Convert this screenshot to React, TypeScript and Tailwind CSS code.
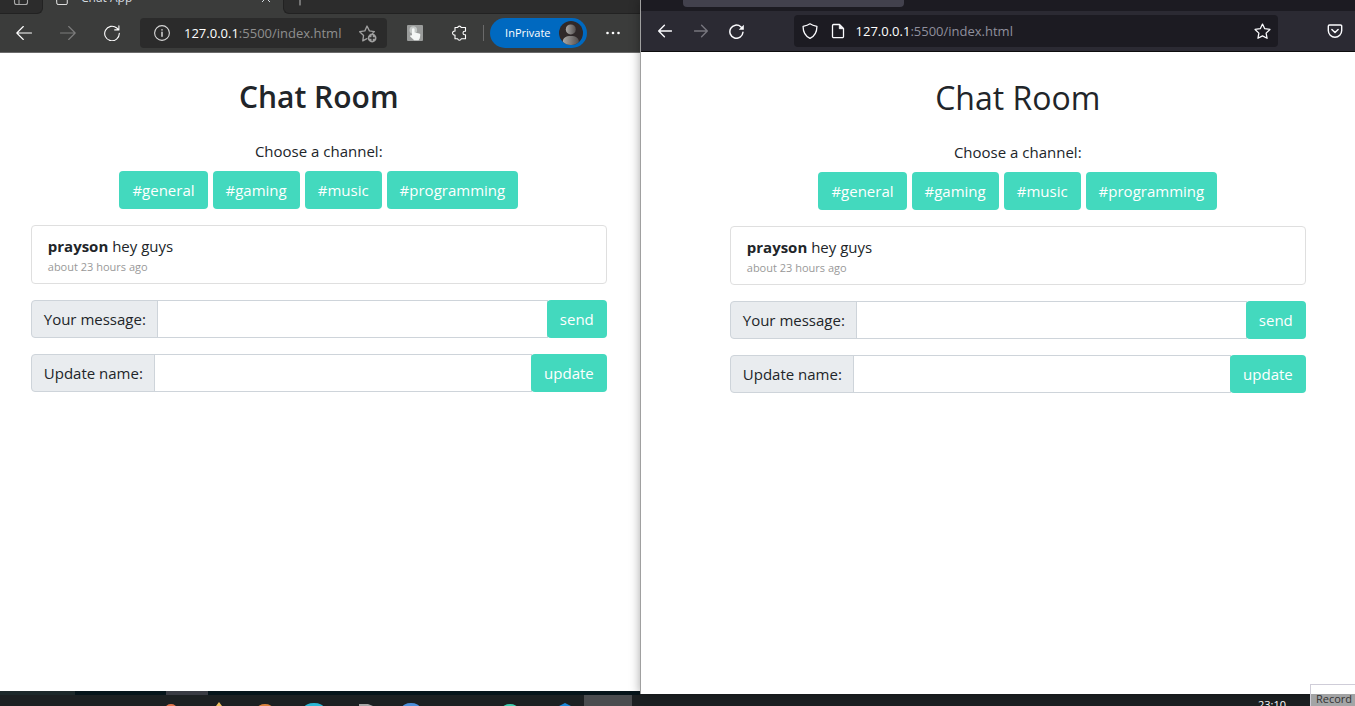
import React, { useId } from "react";
import type { ReactNode } from "react";

const CHANNELS = ["#general", "#gaming", "#music", "#programming"];

const TASKBAR_ICONS = [
  { x: 171, top: 13, r: 6, color: "#e2744a" },
  { x: 265, top: 13, r: 8, color: "#d9803c" },
  { x: 314, top: 12, r: 10, color: "#2bb8d6" },
  { x: 411, top: 12, r: 9, color: "#4c8fdb" },
  { x: 510, top: 13, r: 8, color: "#3fd0b0" },
];

function Icon({ className, size = 16, children }: { className?: string; size?: number; children: ReactNode }) {
  return (
    <svg
      className={className}
      width={size}
      height={size}
      viewBox="0 0 16 16"
      fill="none"
      stroke="currentColor"
      strokeWidth="1.1"
      strokeLinecap="round"
      strokeLinejoin="round"
      aria-hidden="true"
    >
      {children}
    </svg>
  );
}

function ToolButton({ label, className = "", children }: { label: string; className?: string; children: ReactNode }) {
  return (
    <button type="button" aria-label={label} className={`flex size-6 shrink-0 items-center justify-center ${className}`}>
      {children}
    </button>
  );
}

const arrowLeft = <path d="M15.5 8H.8M7.3 1.5.8 8l6.5 6.5" />;
const arrowRight = <path d="M.5 8h14.7M8.7 1.5 15.2 8l-6.5 6.5" />;

function FormRow({ label, action }: { label: string; action: string }) {
  const id = useId();
  return (
    <form className="flex h-[38px]" onSubmit={(e) => e.preventDefault()}>
      <label
        htmlFor={id}
        className="flex items-center rounded-l border border-[#ced4da] bg-[#e9ecef] pr-[11px] pl-3 text-[15px] text-[#212529]"
      >
        {label}
      </label>
      <input id={id} type="text" className="-ml-px min-w-0 flex-1 border border-[#ced4da] bg-white px-3 outline-none" />
      <button type="submit" className="-ml-px rounded bg-[#43d9be] px-[13px] text-[15px] text-white">
        {action}
      </button>
    </form>
  );
}

function ChatRoom({ titleClass }: { titleClass: string }) {
  return (
    <div className="mx-auto flex w-full max-w-[576px] flex-col text-[15px] text-[#212529]">
      <h1 className={`text-center leading-9 ${titleClass}`}>Chat Room</h1>
      <div className="mt-6 text-center leading-6">Choose a channel:</div>
      <div className="mt-2 flex justify-center gap-[5px]">
        {CHANNELS.map((name) => (
          <button key={name} type="button" className="h-[38px] rounded bg-[#43d9be] px-[13px] text-white">
            {name}
          </button>
        ))}
      </div>
      <ul className="my-4 rounded border border-[#dfdfdf] px-4 py-2">
        <li>
          <div className="leading-6">
            <span className="font-bold">prayson</span> <span>hey guys</span>
          </div>
          <div className="text-[11px] leading-[17px] text-[#999]">about 23 hours ago</div>
        </li>
      </ul>
      <div className="flex flex-col gap-4">
        <FormRow label="Your message:" action="send" />
        <FormRow label="Update name:" action="update" />
      </div>
    </div>
  );
}

function Address() {
  return (
    <span className="min-w-0 flex-1 text-[13px] leading-5 whitespace-nowrap">
      <span className="text-white">127.0.0.1</span>:5500/index.html
    </span>
  );
}

function EdgeWindow() {
  return (
    <section className="mb-[3px] flex min-w-0 flex-[640] flex-col bg-white">
      <header className="border-b border-[#6b6b6b] bg-[#3b3c3b]">
        <div className="flex h-[14px] items-end overflow-hidden text-xs text-[#d5dbe0]">
          <div className="flex h-8 w-[43px] shrink-0 items-center justify-center rounded-br-md border-r border-b border-[#222] bg-[#2c2c2c] text-[#a8a8a8]">
            <Icon size={16}>
              <rect x="1.5" y="1" width="13" height="13.5" rx="2" />
              <path d="M6 5v9" />
            </Icon>
          </div>
          <div className="flex h-8 w-60 shrink-0 items-center gap-3 px-3">
            <Icon size={14} className="text-[#f0f0f0]">
              <path d="M2 1h8l4 4v9a1.500 1.500 0 0 1-1.500 1.500h-9A1.500 1.500 0 0 1 2 14z" />
            </Icon>
            <span className="flex-1">Chat App</span>
            <Icon size={10}>
              <path d="m2 2 12 12M14 2 2 14" strokeWidth="1.600" />
            </Icon>
          </div>
          <div className="flex h-8 flex-1 items-center rounded-bl-md border-b border-l border-[#222] bg-[#2c2c2c] px-2 text-[#b0b0b0]">
            <Icon size={16}>
              <path d="M8 1v14M1 8h14" />
            </Icon>
          </div>
        </div>
        <div className="flex h-[38px] items-center pr-[15px] pl-3 text-white">
          <div className="mr-4 flex gap-5">
            <ToolButton label="Back">
              <Icon>{arrowLeft}</Icon>
            </ToolButton>
            <ToolButton label="Forward" className="text-[#7d7d7d]">
              <Icon>{arrowRight}</Icon>
            </ToolButton>
            <ToolButton label="Refresh">
              <Icon size={16}>
                <path d="M15.300 8.300A7.300 7.300 0 1 1 12.800 3l1.900 1.800M14.900.9v4h-4.200" />
              </Icon>
            </ToolButton>
          </div>
          <div className="flex h-[30px] min-w-0 flex-1 items-center rounded bg-[#2b2b2b] pr-2 pl-3.5 text-[#8f8f8f]">
            <Icon size={16} className="mr-3.5 shrink-0 text-[#d8d8d8]">
              <circle cx="8" cy="8" r="7.4" />
              <path d="M8 7.2v4M8 4.7v.3" strokeWidth="1.5" />
            </Icon>
            <Address />
            <ToolButton label="Add to favorites" className="text-[#a0a0a0]">
              <Icon size={19}>
                <path d="M7.5 12.3 4 14.2l.7-4.5L1.4 6.5l4.4-.7L7.6 1.7l2 4.1 4.2.6-1.6 1.5" />
                <circle cx="11.9" cy="11.8" r="3.7" fill="currentColor" stroke="none" />
                <path d="M11.9 9.9v3.8M10 11.8h3.8" stroke="#2b2b2b" />
              </Icon>
            </ToolButton>
          </div>
          <div className="ml-4 flex items-center">
            <ToolButton label="Click extension">
              <svg width="16" height="16" viewBox="0 0 16 16" aria-hidden="true">
                <rect width="16" height="16" rx="1" fill="#9a9c9b" />
                <circle cx="6.3" cy="5" r="3.8" fill="#c4c8c6" />
                <path
                  d="M5 10.400V4.600a1.300 1.300 0 0 1 2.600 0v3l4.600.900c.8.200 1.200.800 1.100 1.600l-.5 3.100-1.200 2H7.200L3.200 11.400c-.5-.900.7-1.700 1.800-1z"
                  fill="#f5f7f6"
                />
              </svg>
            </ToolButton>
            <ToolButton label="Extensions" className="ml-5">
              <Icon size={16}>
                <path d="M4 2.500h2.700a1.800 1.800 0 0 1 3.500 0h4.300v3.700h-.7a1.800 1.800 0 0 0 0 3.600h.7v4h-4.300a1.800 1.800 0 0 1-3.500 0H4V10a2 2 0 1 1 0-3.900z" />
              </Icon>
            </ToolButton>
            <div className="mr-1.5 ml-3 h-4 w-px bg-[#6a6a6a]" />
            <button
              type="button"
              className="flex h-[30px] items-center gap-2 rounded-full bg-[#0069c0] pr-1 pl-[15px] text-[11px] text-white"
            >
              InPrivate
              <svg width="24" height="24" viewBox="0 0 24 24" aria-hidden="true">
                <defs>
                  <linearGradient id="avatar-fill">
                    <stop offset="0" stopColor="#aaa8a6" />
                    <stop offset="1" stopColor="#55504f" />
                  </linearGradient>
                  <clipPath id="avatar-clip">
                    <circle cx="12" cy="12" r="12" />
                  </clipPath>
                </defs>
                <g clipPath="url(#avatar-clip)">
                  <rect width="24" height="24" fill="#302929" />
                  <circle cx="11.8" cy="8.4" r="5" fill="url(#avatar-fill)" />
                  <path d="M3.8 24v-3.5c0-3.5 3-5.5 8-5.5s8 2 8 5.5V24z" fill="url(#avatar-fill)" />
                </g>
              </svg>
            </button>
            <ToolButton label="More" className="ml-3.5">
              <Icon size={16}>
                <g fill="currentColor" stroke="none">
                  <circle cx="2.5" cy="8" r="1.3" />
                  <circle cx="8" cy="8" r="1.3" />
                  <circle cx="13.5" cy="8" r="1.3" />
                </g>
              </Icon>
            </ToolButton>
          </div>
        </div>
      </header>
      <div className="flex-1 pt-[26px] pr-0.5">
        <ChatRoom titleClass="text-[30px] font-semibold" />
      </div>
    </section>
  );
}

function FirefoxWindow() {
  return (
    <section className="z-10 flex min-w-0 flex-[715] flex-col border-l border-[#a0a0a0] bg-white shadow-[0_0_10px_rgba(0,0,0,0.35)]">
      <header className="border-b border-[#0c0c0d] bg-[#2b2a33]">
        <div className="h-[11px] bg-[#1c1b22] pl-[42px]">
          <div className="h-[7px] w-[221px] rounded-b bg-[#42414d]" />
        </div>
        <div className="flex h-10 items-center pr-2 pl-3 text-[#fbfbfe]">
          <div className="flex gap-3">
            <ToolButton label="Back">
              <Icon size={14}>
                <g strokeWidth="1.6">{arrowLeft}</g>
              </Icon>
            </ToolButton>
            <ToolButton label="Forward" className="text-[#77767e]">
              <Icon size={14}>
                <g strokeWidth="1.6">{arrowRight}</g>
              </Icon>
            </ToolButton>
            <ToolButton label="Reload">
              <Icon size={15}>
                <path d="M14.9 8.8A7 7 0 1 1 12.6 3l1.2 1.4" strokeWidth="1.6" />
                <path d="M15.8.8v5.4h-5.400z" fill="currentColor" stroke="none" />
              </Icon>
            </ToolButton>
          </div>
          <div className="ml-[45px] flex h-8 min-w-0 flex-1 items-center rounded bg-[#1c1b22] pr-1 pl-2 text-[#8f8f9d]">
            <Icon size={16} className="mr-3 shrink-0 text-[#fbfbfe]">
              <path d="M8 .8c2 1.4 4.2 2 6.9 2.500C15 8.800 12.700 13 8 15.400 3.300 13 1 8.800 1.100 3.300 3.800 2.800 6 2.200 8 .8z" strokeWidth="1.3" />
            </Icon>
            <Icon size={16} className="mr-2.5 shrink-0 text-[#fbfbfe]">
              <path d="M3.500 1.500h6l4 4v8a1.200 1.200 0 0 1-1.200 1.200H3.700a1.200 1.200 0 0 1-1.200-1.200v-11a1.200 1.200 0 0 1 1-1z" strokeWidth="1.3" />
              <path d="M9.300 1.700v4h4z" fill="currentColor" strokeWidth=".8" />
            </Icon>
            <Address />
            <ToolButton label="Bookmark this page" className="text-[#fbfbfe]">
              <Icon size={17}>
                <path d="m8 1 2.100 4.400 4.900.7-3.600 3.400.9 4.900L8 12.100l-4.300 2.300.9-4.900L1 6.100l4.900-.7z" strokeWidth="1.2" />
              </Icon>
            </ToolButton>
          </div>
          <ToolButton label="Save to Pocket" className="ml-[45px]">
            <Icon size={16}>
              <path d="M2.500 2h11A1.200 1.200 0 0 1 14.700 3.200v4.300a6.700 6.700 0 0 1-13.400 0V3.200A1.200 1.200 0 0 1 2.500 2z" strokeWidth="1.4" />
              <path d="m4.900 6.500 3.100 3 3.100-3" strokeWidth="1.5" />
            </Icon>
          </ToolButton>
        </div>
      </header>
      <div className="flex-1 pt-7 pl-10">
        <ChatRoom titleClass="text-[32px] font-normal" />
      </div>
    </section>
  );
}

function Taskbar() {
  return (
    <footer className="flex h-3 shrink-0 items-start bg-[#1c2022]">
      <svg width="640" height="15" viewBox="0 0 640 15" className="-mt-[3px] shrink-0" aria-hidden="true">
        <rect width="640" height="4" fill="#06151b" />
        <rect width="75" height="4" fill="#1d292b" />
        <rect x="166" width="42" height="4" fill="#3a3c44" />
        <rect x="584" y="4" width="48" height="11" fill="#4a4c4f" />
        {TASKBAR_ICONS.map((icon) => (
          <ellipse key={icon.x} cx={icon.x} cy={icon.top + 5} rx={icon.r} ry="5" fill={icon.color} />
        ))}
        <path d="m219 11 3 4h-6z" fill="#f0c060" />
        <path d="M359 13h9l5 2h-14z" fill="#a5a5a5" />
        <path d="m559 15 6-3 6 3z" fill="#1b86d8" />
      </svg>
      <div className="flex flex-1 justify-end pt-1 pr-[69px] text-[11px] leading-[14px] text-white">23:10</div>
    </footer>
  );
}

export default function App() {
  return (
    <div className="relative flex h-screen flex-col overflow-hidden bg-[#1c2022] font-['Open_Sans','Noto_Sans',sans-serif]">
      <main className="flex min-h-0 flex-1">
        <EdgeWindow />
        <FirefoxWindow />
      </main>
      <Taskbar />
      <div className="absolute right-0 bottom-0 z-20 flex h-[22px] w-[45px] items-end border-t border-l border-[#cfcdd8] bg-white/60 pl-[5px] text-[11px] leading-[15px] text-[#333]">
        Record
      </div>
    </div>
  );
}
